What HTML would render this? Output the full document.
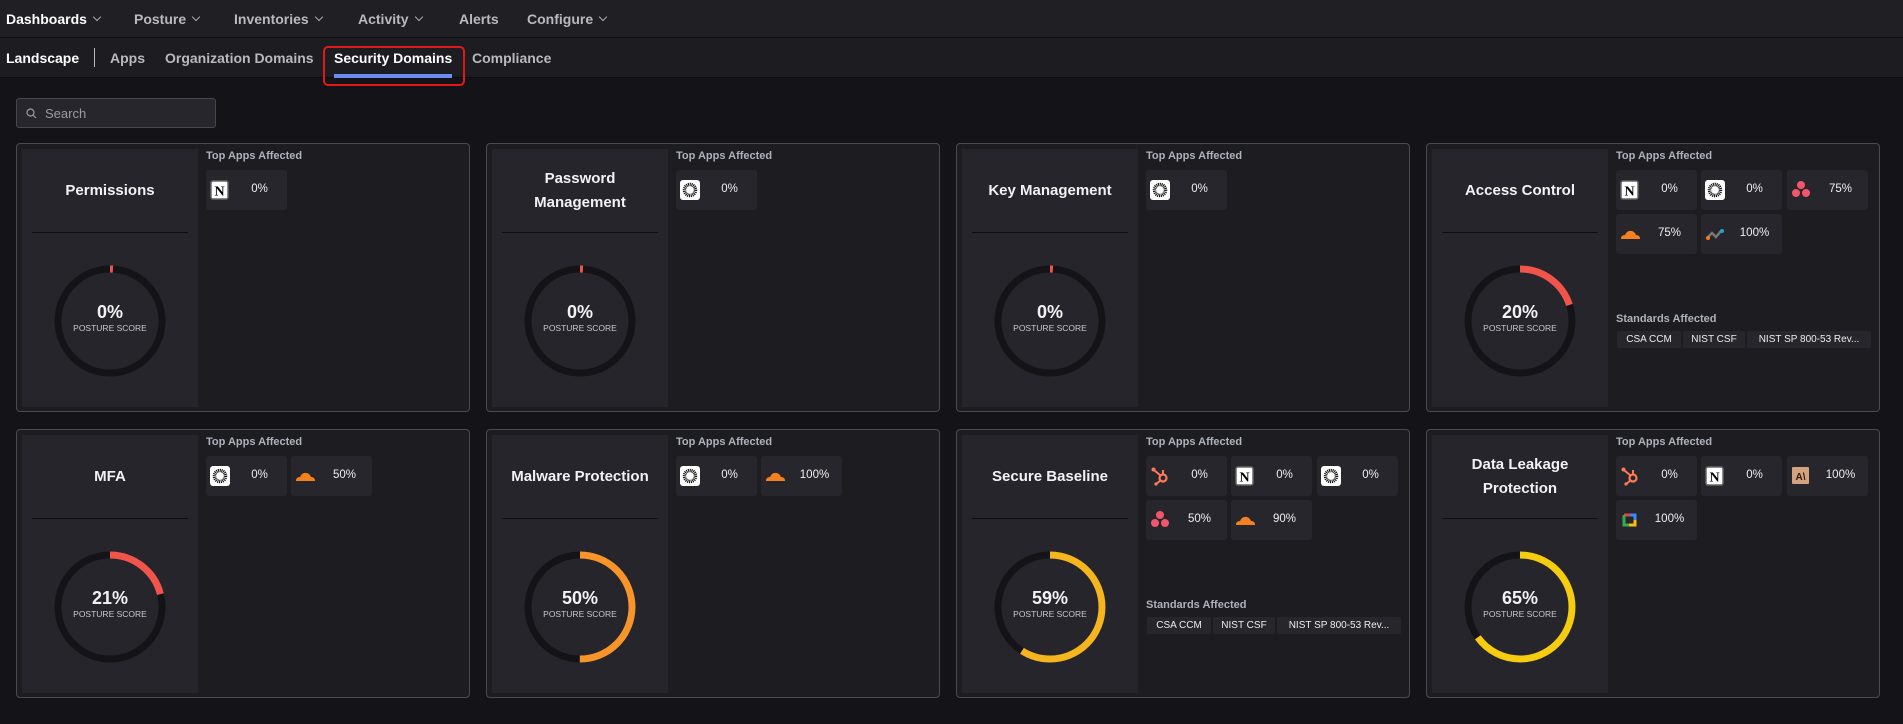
<!DOCTYPE html>
<html><head><meta charset="utf-8"><style>
*{box-sizing:border-box;margin:0;padding:0}
body{width:1903px;height:724px;background:#131318;font-family:"Liberation Sans",sans-serif;color:#e6e6ea;position:relative;overflow:hidden}
.top{position:absolute;left:0;top:0;width:1903px;height:38px;background:#1f1f24;border-bottom:1px solid #0c0c0f}
.sub{position:absolute;left:0;top:38px;width:1903px;height:40px;background:#1c1c21;border-bottom:1px solid #0c0c0f}
.n{position:absolute;font-size:14px;font-weight:bold;color:#b9b9c0;top:11px}
.n.a{color:#fff}
.car{display:inline-block;width:6px;height:6px;border-right:1.3px solid #aaa;border-bottom:1.3px solid #aaa;transform:rotate(45deg);margin-left:7px;position:relative;top:-4px}
.s{position:absolute;font-size:14px;font-weight:bold;color:#b9b9c0;top:12px}
.search{position:absolute;left:16px;top:98px;width:200px;height:30px;border:1px solid #47474d;border-radius:3px;background:#26262c;font-size:13px;color:#9b9ba2;padding:7px 0 0 28px}
.card{position:absolute;width:454px;height:269px;border:1px solid #4a4a50;border-radius:4px;background:#1c1c21}
.lp{position:absolute;left:5px;top:5px;width:176px;height:258px;background:#25252b}
.t{position:absolute;left:0;top:0;width:176px;height:83px;display:flex;align-items:center;justify-content:center;text-align:center;font-size:15px;font-weight:bold;line-height:24px;color:#f2f2f4}
.dv{position:absolute;left:10px;top:83px;width:156px;height:1px;background:#0e0e11}
.ring{position:absolute;left:28px;top:112px}
.pc{position:absolute;left:0;width:176px;top:153px;text-align:center;font-size:18px;font-weight:bold;color:#f2f2f4}
.ps{position:absolute;left:0;width:176px;top:174px;text-align:center;font-size:8.5px;color:#c8c8cc}
.ta{position:absolute;left:189px;top:6px;font-size:11px;font-weight:bold;color:#aeb2bb}
.chip{position:absolute;width:81px;height:40px;background:#26262c;border-radius:3px}
.chip svg{position:absolute;left:4px;top:10px}
.chip span{position:absolute;left:26px;right:0;top:13px;text-align:center;font-size:11.5px;color:#f0f0f2}
.sa{position:absolute;left:189px;top:169px;font-size:11px;font-weight:bold;color:#aeb2bb}
.std{position:absolute;top:187px;height:17px;background:#26262c;border-radius:2px;font-size:10px;color:#eee;text-align:center;line-height:17px}
</style></head><body>
<div class="top">
<div class="n a" style="left:6px">Dashboards<i class="car"></i></div>
<div class="n" style="left:134px">Posture<i class="car"></i></div>
<div class="n" style="left:234px">Inventories<i class="car"></i></div>
<div class="n" style="left:358px">Activity<i class="car"></i></div>
<div class="n" style="left:459px">Alerts</div>
<div class="n" style="left:527px">Configure<i class="car"></i></div>
</div>
<div class="sub">
<div class="s" style="left:6px;color:#fff">Landscape</div>
<div style="position:absolute;left:94px;top:10px;width:1px;height:19px;background:#bbb"></div>
<div class="s" style="left:110px">Apps</div>
<div class="s" style="left:165px">Organization Domains</div>
<div class="s" style="left:334px;color:#fff">Security Domains</div>
<div style="position:absolute;left:334px;top:36px;width:118px;height:4px;background:#6b8cf0"></div>
<div style="position:absolute;left:323px;top:8px;width:142px;height:40px;border:2px solid #e01a1a;border-radius:5px"></div>
<div class="s" style="left:472px">Compliance</div>
</div>
<div class="search"><svg style="position:absolute;left:9px;top:9px" width="11" height="11" viewBox="0 0 11 11"><circle cx="4.5" cy="4.5" r="3.5" fill="none" stroke="#9b9ba2" stroke-width="1.2"/><path d="M7 7l3 3" stroke="#9b9ba2" stroke-width="1.2"/></svg>Search</div>

<!-- Row 1 -->
<div class="card" style="left:16px;top:143px">
<div class="lp"><div class="t">Permissions</div><div class="dv"></div>
<svg class="ring" width="120" height="120" viewBox="0 0 120 120"><circle cx="60" cy="60" r="52" fill="none" stroke="#141418" stroke-width="7"/><circle cx="60" cy="60" r="52" fill="none" stroke="#f0544a" stroke-width="7" stroke-dasharray="3 400" transform="rotate(-90 60 60)"/></svg>
<div class="pc">0%</div><div class="ps">POSTURE SCORE</div></div>
<div class="ta">Top Apps Affected</div>
<div class="chip" style="left:189px;top:26px"><svg width="20" height="20" viewBox="0 0 20 20"><rect x="1" y="1" width="17" height="18" rx="2" fill="#fff" stroke="#666" stroke-width="1.5"/><text x="9.5" y="15.5" font-family="Liberation Serif" font-weight="bold" font-size="14" text-anchor="middle" fill="#000">N</text></svg><span>0%</span></div>
</div>

<div class="card" style="left:486px;top:143px">
<div class="lp"><div class="t">Password<br>Management</div><div class="dv"></div>
<svg class="ring" width="120" height="120" viewBox="0 0 120 120"><circle cx="60" cy="60" r="52" fill="none" stroke="#141418" stroke-width="7"/><circle cx="60" cy="60" r="52" fill="none" stroke="#f0544a" stroke-width="7" stroke-dasharray="3 400" transform="rotate(-90 60 60)"/></svg>
<div class="pc">0%</div><div class="ps">POSTURE SCORE</div></div>
<div class="ta">Top Apps Affected</div>
<div class="chip" style="left:189px;top:26px"><svg width="20" height="20" viewBox="0 0 20 20"><rect width="20" height="20" rx="3" fill="#fff"/><circle cx="10" cy="10" r="5.5" fill="none" stroke="#111" stroke-width="3.5" stroke-dasharray="1 0.7"/></svg><span>0%</span></div>
</div>

<div class="card" style="left:956px;top:143px">
<div class="lp"><div class="t">Key Management</div><div class="dv"></div>
<svg class="ring" width="120" height="120" viewBox="0 0 120 120"><circle cx="60" cy="60" r="52" fill="none" stroke="#141418" stroke-width="7"/><circle cx="60" cy="60" r="52" fill="none" stroke="#f0544a" stroke-width="7" stroke-dasharray="3 400" transform="rotate(-90 60 60)"/></svg>
<div class="pc">0%</div><div class="ps">POSTURE SCORE</div></div>
<div class="ta">Top Apps Affected</div>
<div class="chip" style="left:189px;top:26px"><svg width="20" height="20" viewBox="0 0 20 20"><rect width="20" height="20" rx="3" fill="#fff"/><circle cx="10" cy="10" r="5.5" fill="none" stroke="#111" stroke-width="3.5" stroke-dasharray="1 0.7"/></svg><span>0%</span></div>
</div>

<div class="card" style="left:1426px;top:143px">
<div class="lp"><div class="t">Access Control</div><div class="dv"></div>
<svg class="ring" width="120" height="120" viewBox="0 0 120 120"><circle cx="60" cy="60" r="52" fill="none" stroke="#141418" stroke-width="7"/><circle cx="60" cy="60" r="52" fill="none" stroke="#f0544a" stroke-width="7" stroke-dasharray="65.3 400" transform="rotate(-90 60 60)"/></svg>
<div class="pc">20%</div><div class="ps">POSTURE SCORE</div></div>
<div class="ta">Top Apps Affected</div>
<div class="chip" style="left:189px;top:26px"><svg width="20" height="20" viewBox="0 0 20 20"><rect x="1" y="1" width="17" height="18" rx="2" fill="#fff" stroke="#666" stroke-width="1.5"/><text x="9.5" y="15.5" font-family="Liberation Serif" font-weight="bold" font-size="14" text-anchor="middle" fill="#000">N</text></svg><span>0%</span></div>
<div class="chip" style="left:274px;top:26px"><svg width="20" height="20" viewBox="0 0 20 20"><rect width="20" height="20" rx="3" fill="#fff"/><circle cx="10" cy="10" r="5.5" fill="none" stroke="#111" stroke-width="3.5" stroke-dasharray="1 0.7"/></svg><span>0%</span></div>
<div class="chip" style="left:360px;top:26px"><svg width="20" height="20" viewBox="0 0 20 20"><circle cx="10" cy="5" r="4" fill="#f2566a"/><circle cx="5" cy="13" r="4" fill="#f2566a"/><circle cx="15" cy="13" r="4" fill="#f2566a"/></svg><span>75%</span></div>
<div class="chip" style="left:189px;top:70px"><svg width="20" height="20" viewBox="0 0 20 20"><path d="M1 15 Q1 11 5 11 Q7 6 12 7 Q15 8 16 11 Q20 11 20 15 Z" fill="#f48120"/></svg><span>75%</span></div>
<div class="chip" style="left:274px;top:70px"><svg width="20" height="20" viewBox="0 0 20 20"><path d="M2 14 L7 9 L11 13 L16 7" fill="none" stroke="#777" stroke-width="2.5"/><circle cx="3" cy="14" r="2" fill="#f47b20"/><circle cx="17" cy="7" r="2" fill="#1fa7d1"/></svg><span>100%</span></div>
<div class="sa">Standards Affected</div>
<div class="std" style="left:190px;width:64px">CSA CCM</div>
<div class="std" style="left:256px;width:62px">NIST CSF</div>
<div class="std" style="left:320px;width:124px">NIST SP 800-53 Rev...</div>
</div>

<!-- Row 2 -->
<div class="card" style="left:16px;top:429px">
<div class="lp"><div class="t">MFA</div><div class="dv"></div>
<svg class="ring" width="120" height="120" viewBox="0 0 120 120"><circle cx="60" cy="60" r="52" fill="none" stroke="#141418" stroke-width="7"/><circle cx="60" cy="60" r="52" fill="none" stroke="#f0544a" stroke-width="7" stroke-dasharray="68.6 400" transform="rotate(-90 60 60)"/></svg>
<div class="pc">21%</div><div class="ps">POSTURE SCORE</div></div>
<div class="ta">Top Apps Affected</div>
<div class="chip" style="left:189px;top:26px"><svg width="20" height="20" viewBox="0 0 20 20"><rect width="20" height="20" rx="3" fill="#fff"/><circle cx="10" cy="10" r="5.5" fill="none" stroke="#111" stroke-width="3.5" stroke-dasharray="1 0.7"/></svg><span>0%</span></div>
<div class="chip" style="left:274px;top:26px"><svg width="20" height="20" viewBox="0 0 20 20"><path d="M1 15 Q1 11 5 11 Q7 6 12 7 Q15 8 16 11 Q20 11 20 15 Z" fill="#f48120"/></svg><span>50%</span></div>
</div>

<div class="card" style="left:486px;top:429px">
<div class="lp"><div class="t">Malware Protection</div><div class="dv"></div>
<svg class="ring" width="120" height="120" viewBox="0 0 120 120"><circle cx="60" cy="60" r="52" fill="none" stroke="#141418" stroke-width="7"/><circle cx="60" cy="60" r="52" fill="none" stroke="#f7952b" stroke-width="7" stroke-dasharray="163.4 400" transform="rotate(-90 60 60)"/></svg>
<div class="pc">50%</div><div class="ps">POSTURE SCORE</div></div>
<div class="ta">Top Apps Affected</div>
<div class="chip" style="left:189px;top:26px"><svg width="20" height="20" viewBox="0 0 20 20"><rect width="20" height="20" rx="3" fill="#fff"/><circle cx="10" cy="10" r="5.5" fill="none" stroke="#111" stroke-width="3.5" stroke-dasharray="1 0.7"/></svg><span>0%</span></div>
<div class="chip" style="left:274px;top:26px"><svg width="20" height="20" viewBox="0 0 20 20"><path d="M1 15 Q1 11 5 11 Q7 6 12 7 Q15 8 16 11 Q20 11 20 15 Z" fill="#f48120"/></svg><span>100%</span></div>
</div>

<div class="card" style="left:956px;top:429px">
<div class="lp"><div class="t">Secure Baseline</div><div class="dv"></div>
<svg class="ring" width="120" height="120" viewBox="0 0 120 120"><circle cx="60" cy="60" r="52" fill="none" stroke="#141418" stroke-width="7"/><circle cx="60" cy="60" r="52" fill="none" stroke="#f5b51e" stroke-width="7" stroke-dasharray="192.8 400" transform="rotate(-90 60 60)"/></svg>
<div class="pc">59%</div><div class="ps">POSTURE SCORE</div></div>
<div class="ta">Top Apps Affected</div>
<div class="chip" style="left:189px;top:26px"><svg width="20" height="20" viewBox="0 0 20 20"><circle cx="13" cy="12" r="3.5" fill="none" stroke="#ff7a59" stroke-width="2.2"/><path d="M10.5 9.5 L4 4 M13 8.5 V4 M10.5 14.5 L6 18" stroke="#ff7a59" stroke-width="2"/><circle cx="3.5" cy="3.5" r="2" fill="#ff7a59"/><circle cx="6" cy="18" r="1.6" fill="#ff7a59"/></svg><span>0%</span></div>
<div class="chip" style="left:274px;top:26px"><svg width="20" height="20" viewBox="0 0 20 20"><rect x="1" y="1" width="17" height="18" rx="2" fill="#fff" stroke="#666" stroke-width="1.5"/><text x="9.5" y="15.5" font-family="Liberation Serif" font-weight="bold" font-size="14" text-anchor="middle" fill="#000">N</text></svg><span>0%</span></div>
<div class="chip" style="left:360px;top:26px"><svg width="20" height="20" viewBox="0 0 20 20"><rect width="20" height="20" rx="3" fill="#fff"/><circle cx="10" cy="10" r="5.5" fill="none" stroke="#111" stroke-width="3.5" stroke-dasharray="1 0.7"/></svg><span>0%</span></div>
<div class="chip" style="left:189px;top:70px"><svg width="20" height="20" viewBox="0 0 20 20"><circle cx="10" cy="5" r="4" fill="#f2566a"/><circle cx="5" cy="13" r="4" fill="#f2566a"/><circle cx="15" cy="13" r="4" fill="#f2566a"/></svg><span>50%</span></div>
<div class="chip" style="left:274px;top:70px"><svg width="20" height="20" viewBox="0 0 20 20"><path d="M1 15 Q1 11 5 11 Q7 6 12 7 Q15 8 16 11 Q20 11 20 15 Z" fill="#f48120"/></svg><span>90%</span></div>
<div class="sa">Standards Affected</div>
<div class="std" style="left:190px;width:64px">CSA CCM</div>
<div class="std" style="left:256px;width:62px">NIST CSF</div>
<div class="std" style="left:320px;width:124px">NIST SP 800-53 Rev...</div>
</div>

<div class="card" style="left:1426px;top:429px">
<div class="lp"><div class="t">Data Leakage<br>Protection</div><div class="dv"></div>
<svg class="ring" width="120" height="120" viewBox="0 0 120 120"><circle cx="60" cy="60" r="52" fill="none" stroke="#141418" stroke-width="7"/><circle cx="60" cy="60" r="52" fill="none" stroke="#f5cc10" stroke-width="7" stroke-dasharray="212.4 400" transform="rotate(-90 60 60)"/></svg>
<div class="pc">65%</div><div class="ps">POSTURE SCORE</div></div>
<div class="ta">Top Apps Affected</div>
<div class="chip" style="left:189px;top:26px"><svg width="20" height="20" viewBox="0 0 20 20"><circle cx="13" cy="12" r="3.5" fill="none" stroke="#ff7a59" stroke-width="2.2"/><path d="M10.5 9.5 L4 4 M13 8.5 V4 M10.5 14.5 L6 18" stroke="#ff7a59" stroke-width="2"/><circle cx="3.5" cy="3.5" r="2" fill="#ff7a59"/><circle cx="6" cy="18" r="1.6" fill="#ff7a59"/></svg><span>0%</span></div>
<div class="chip" style="left:274px;top:26px"><svg width="20" height="20" viewBox="0 0 20 20"><rect x="1" y="1" width="17" height="18" rx="2" fill="#fff" stroke="#666" stroke-width="1.5"/><text x="9.5" y="15.5" font-family="Liberation Serif" font-weight="bold" font-size="14" text-anchor="middle" fill="#000">N</text></svg><span>0%</span></div>
<div class="chip" style="left:360px;top:26px"><svg width="20" height="20" viewBox="0 0 20 20"><rect x="1" y="1" width="17" height="17" rx="1" fill="#d4a27f"/><text x="9.5" y="14" font-family="Liberation Sans" font-weight="bold" font-size="10" text-anchor="middle" fill="#2a1a10">A\</text></svg><span>100%</span></div>
<div class="chip" style="left:189px;top:70px"><svg width="20" height="20" viewBox="0 0 20 20"><path d="M4 5 H10" stroke="#ea4335" stroke-width="3"/><path d="M10 5 H15 V10" stroke="#4285f4" stroke-width="3" fill="none"/><path d="M15 10 V15 H9" stroke="#fbbc04" stroke-width="3" fill="none"/><path d="M9 15 H4 V5" stroke="#34a853" stroke-width="3" fill="none"/></svg><span>100%</span></div>
</div>
</body></html>
